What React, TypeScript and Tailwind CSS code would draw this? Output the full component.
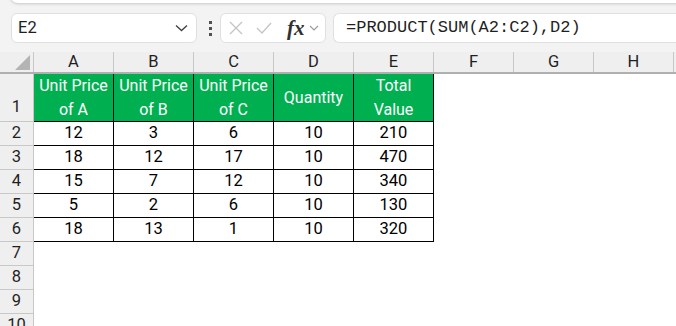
import React from 'react';

const cols = ['A', 'B', 'C', 'D', 'E', 'F', 'G', 'H'];

const header = [
  ['Unit Price', 'of A'],
  ['Unit Price', 'of B'],
  ['Unit Price', 'of C'],
  ['Quantity'],
  ['Total', 'Value'],
];

const rows = [
  [12, 3, 6, 10, 210],
  [18, 12, 17, 10, 470],
  [15, 7, 12, 10, 340],
  [5, 2, 6, 10, 130],
  [18, 13, 1, 10, 320],
];

const RowHead: React.FC<{ n: number; tall?: boolean }> = ({ n, tall }) => (
  <div
    className={`flex w-[34px] shrink-0 justify-center border-r border-b border-[#c8c8c8] bg-[#efefef] text-[16.5px] text-[#1f1f1f] ${
      tall ? 'h-[48px] items-end pb-[1px]' : 'h-[24px] items-center'
    }`}
  >
    {n}
  </div>
);

const App: React.FC = () => {
  return (
    <div className="h-[326px] w-[676px] overflow-hidden bg-white" style={{ fontFamily: 'Roboto, "Liberation Sans", sans-serif' }}>
      {/* ribbon edge + formula bar */}
      <div className="relative h-[52px] bg-[#f3f3f3]">
        <div className="absolute left-[10px] right-[-10px] top-[-10px] h-[13px] rounded-b-[8px] bg-white shadow-[0_1px_3px_rgba(0,0,0,0.18)]" />
        <div className="flex items-center pt-[13px]">
          <div className="ml-[11px] flex h-[30px] w-[186px] items-center justify-between rounded-[6px] border border-[#e0e0e0] bg-white pl-[6px] pr-[8px] text-[16.5px] text-[#1f1f1f]">
            <span>E2</span>
            <svg width="13" height="8" viewBox="0 0 13 8">
              <path d="M1 1.5 L6.5 6.5 L12 1.5" fill="none" stroke="#404040" strokeWidth="1.3" />
            </svg>
          </div>
          <div className="ml-[11px] flex w-[4px] flex-col items-center gap-[3px]">
            <span className="h-[3px] w-[3px] bg-[#505050]" />
            <span className="h-[3px] w-[3px] bg-[#505050]" />
            <span className="h-[3px] w-[3px] bg-[#505050]" />
          </div>
          <div className="ml-[8px] flex h-[30px] w-[106px] items-center rounded-[6px] border border-[#e0e0e0] bg-white pl-[8px]">
            <svg width="14" height="14" viewBox="0 0 14 14">
              <path d="M1 1 L13 13 M13 1 L1 13" stroke="#c4c4c4" strokeWidth="1.3" />
            </svg>
            <svg className="ml-[13px]" width="16" height="12" viewBox="0 0 16 12">
              <path d="M1 6 L6 11 L15 1" fill="none" stroke="#c4c4c4" strokeWidth="1.3" />
            </svg>
            <span
              className="ml-[15px] text-[21px] font-bold italic leading-none text-[#303030]"
              style={{ fontFamily: '"Liberation Serif", serif' }}
            >
              fx
            </span>
            <svg className="ml-[4px]" width="10" height="6" viewBox="0 0 10 6">
              <path d="M1 1 L5 5 L9 1" fill="none" stroke="#9a9a9a" strokeWidth="1.1" />
            </svg>
          </div>
          <div className="ml-[7px] flex h-[30px] flex-1 items-center rounded-l-[6px] border border-r-0 border-[#e0e0e0] bg-white pl-[12px]">
            <span className="text-[17px] text-[#1f1f1f]" style={{ fontFamily: '"Liberation Mono", monospace' }}>
              =PRODUCT(SUM(A2:C2),D2)
            </span>
          </div>
        </div>
      </div>

      {/* column headers */}
      <div className="flex h-[22px] border-b-2 border-[#b0b0b0] bg-[#efefef]">
        <div className="relative w-[34px] shrink-0 border-r border-[#c8c8c8]">
          <div className="absolute bottom-[2px] right-[3px] h-0 w-0 border-b-[15px] border-l-[15px] border-b-[#b4b4b4] border-l-transparent" />
        </div>
        {cols.map((c) => (
          <div key={c} className="flex w-[80px] shrink-0 items-center justify-center border-r border-[#c8c8c8] text-[16.5px] text-[#1f1f1f]">
            {c}
          </div>
        ))}
      </div>

      {/* row 1 */}
      <div className="flex">
        <RowHead n={1} tall />
        {header.map((h, i) => (
          <div
            key={i}
            className="flex h-[48px] w-[80px] shrink-0 flex-col items-center justify-center border-r border-b border-black bg-[#00b050] text-[16px] leading-[24px] text-white"
          >
            {h.map((t) => (
              <span key={t}>{t}</span>
            ))}
          </div>
        ))}
      </div>

      {/* rows 2-6 */}
      {rows.map((r, i) => (
        <div key={i} className="flex">
          <RowHead n={i + 2} />
          {r.map((v, j) => (
            <div
              key={j}
              className="flex h-[24px] w-[80px] shrink-0 items-center justify-center border-r border-b border-black text-[16.5px] text-black"
            >
              {v}
            </div>
          ))}
        </div>
      ))}

      {/* empty rows */}
      {[7, 8, 9, 10].map((n) => (
        <div key={n} className="flex">
          <RowHead n={n} />
        </div>
      ))}
    </div>
  );
};

export default App;
